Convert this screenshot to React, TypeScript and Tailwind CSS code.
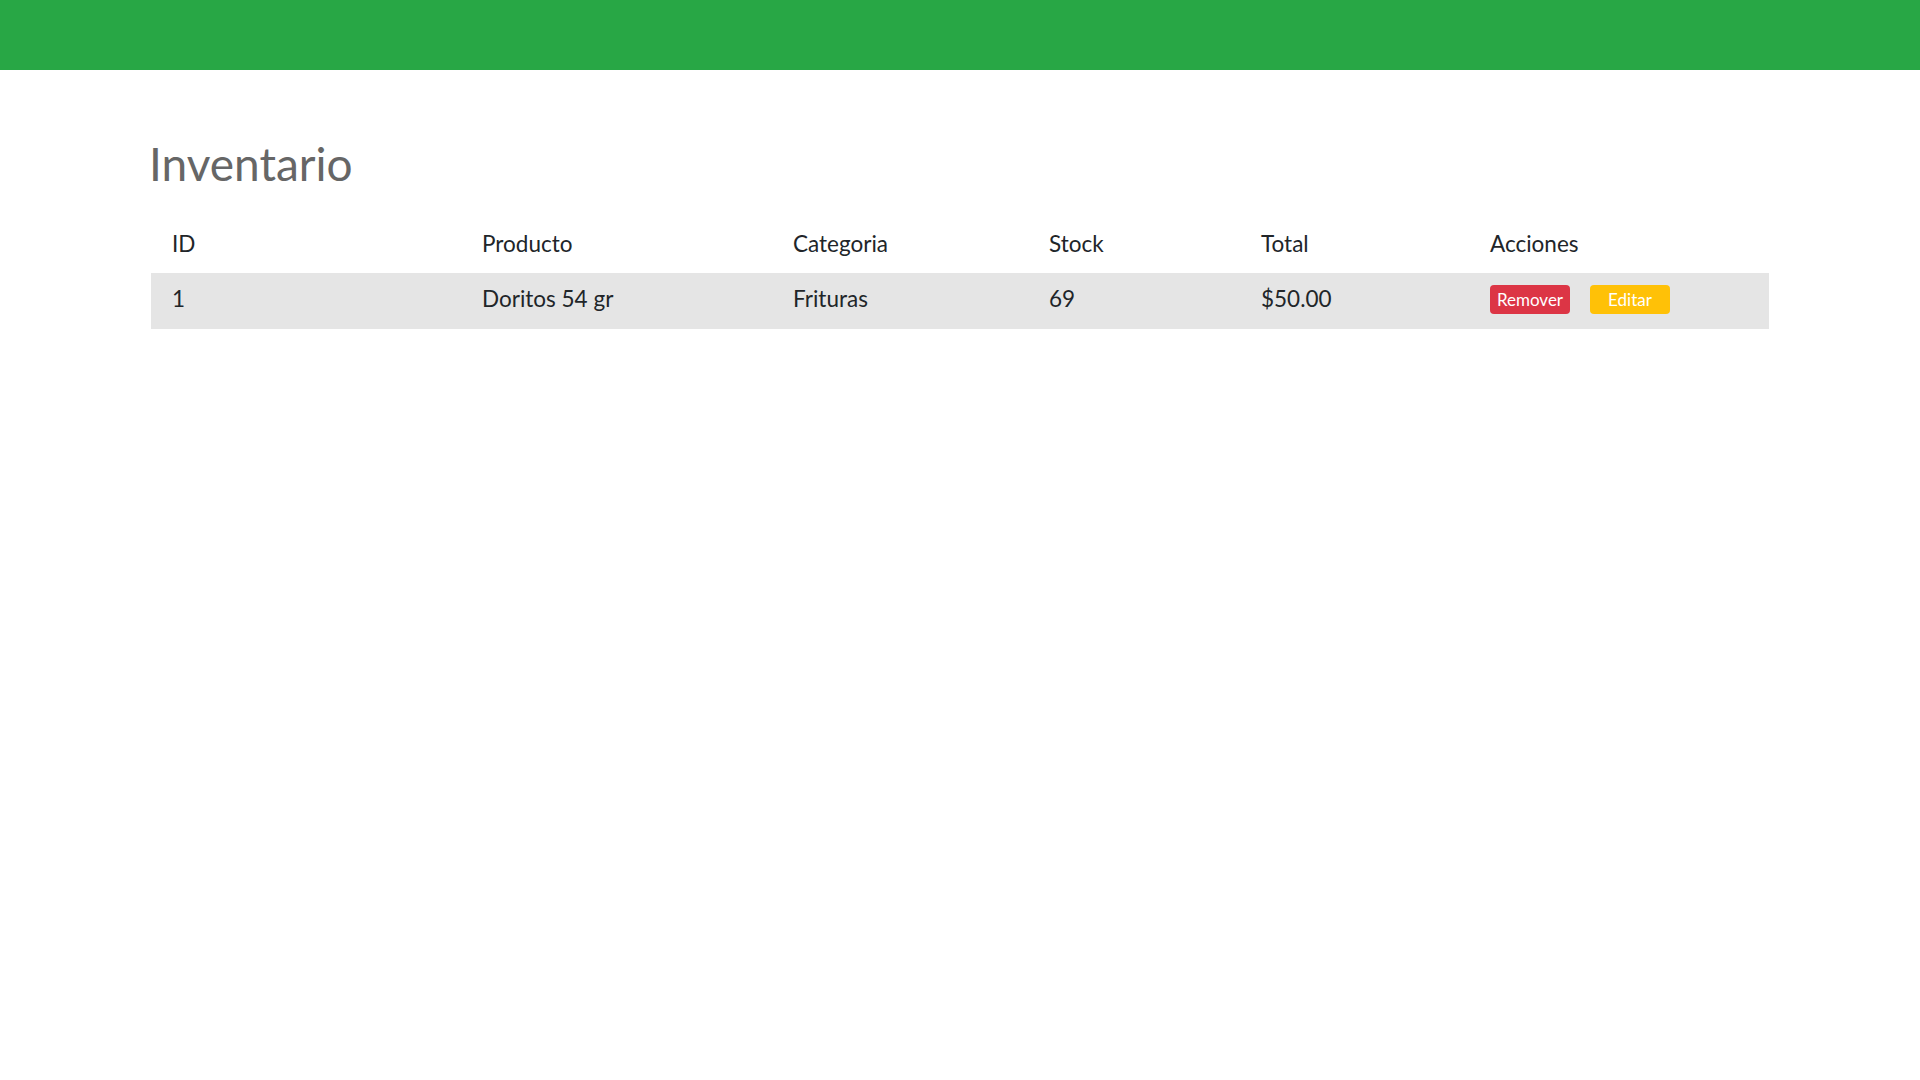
const columns = [
	{ label: 'ID', width: 'w-[310px]' },
	{ label: 'Producto', width: 'w-[311px]' },
	{ label: 'Categoria', width: 'w-[256px]' },
	{ label: 'Stock', width: 'w-[212px]' },
	{ label: 'Total', width: 'w-[229px]' },
	{ label: 'Acciones', width: 'w-[300px]' }
];

interface Item {
	id: number;
	producto: string;
	categoria: string;
	stock: number;
	total: string;
}

const items: Item[] = [{ id: 1, producto: 'Doritos 54 gr', categoria: 'Frituras', stock: 69, total: '$50.00' }];

const cell = 'pl-[21px] pt-[9px] pb-[13px]';

const App = () => {
	return (
		<div className="min-h-screen bg-white font-['Lato',sans-serif] text-[#212529]">
			<header className="h-[70px] bg-[#28a745]" />
			<main className="mx-[151px]">
				<h1 className="-ml-[2px] mt-[66px] text-[46px] leading-[1.2] text-[#666666]">Inventario</h1>
				<table className="mt-[31px] w-full table-fixed border-collapse text-[22.5px] leading-[34px]">
					<thead>
						<tr>
							{columns.map(({ label, width }) => (
								<th key={label} className={`${width} pl-[21px] pt-[5px] pb-[12px] text-left font-normal`}>
									{label}
								</th>
							))}
						</tr>
					</thead>
					<tbody>
						{items.map((item) => (
							<tr key={item.id} className="bg-[#e5e5e5]">
								<td className={cell}>{item.id}</td>
								<td className={cell}>{item.producto}</td>
								<td className={cell}>{item.categoria}</td>
								<td className={cell}>{item.stock}</td>
								<td className={cell}>{item.total}</td>
								<td className={cell}>
									<div className="flex h-[34px] items-center gap-[20px]">
										<button className="h-[29px] w-[80px] rounded-[4px] bg-[#dc3545] text-[17px] leading-none text-white">
											Remover
										</button>
										<button className="h-[29px] w-[80px] rounded-[4px] bg-[#ffc107] text-[17px] leading-none text-white">
											Editar
										</button>
									</div>
								</td>
							</tr>
						))}
					</tbody>
				</table>
			</main>
		</div>
	);
};

export default App;
